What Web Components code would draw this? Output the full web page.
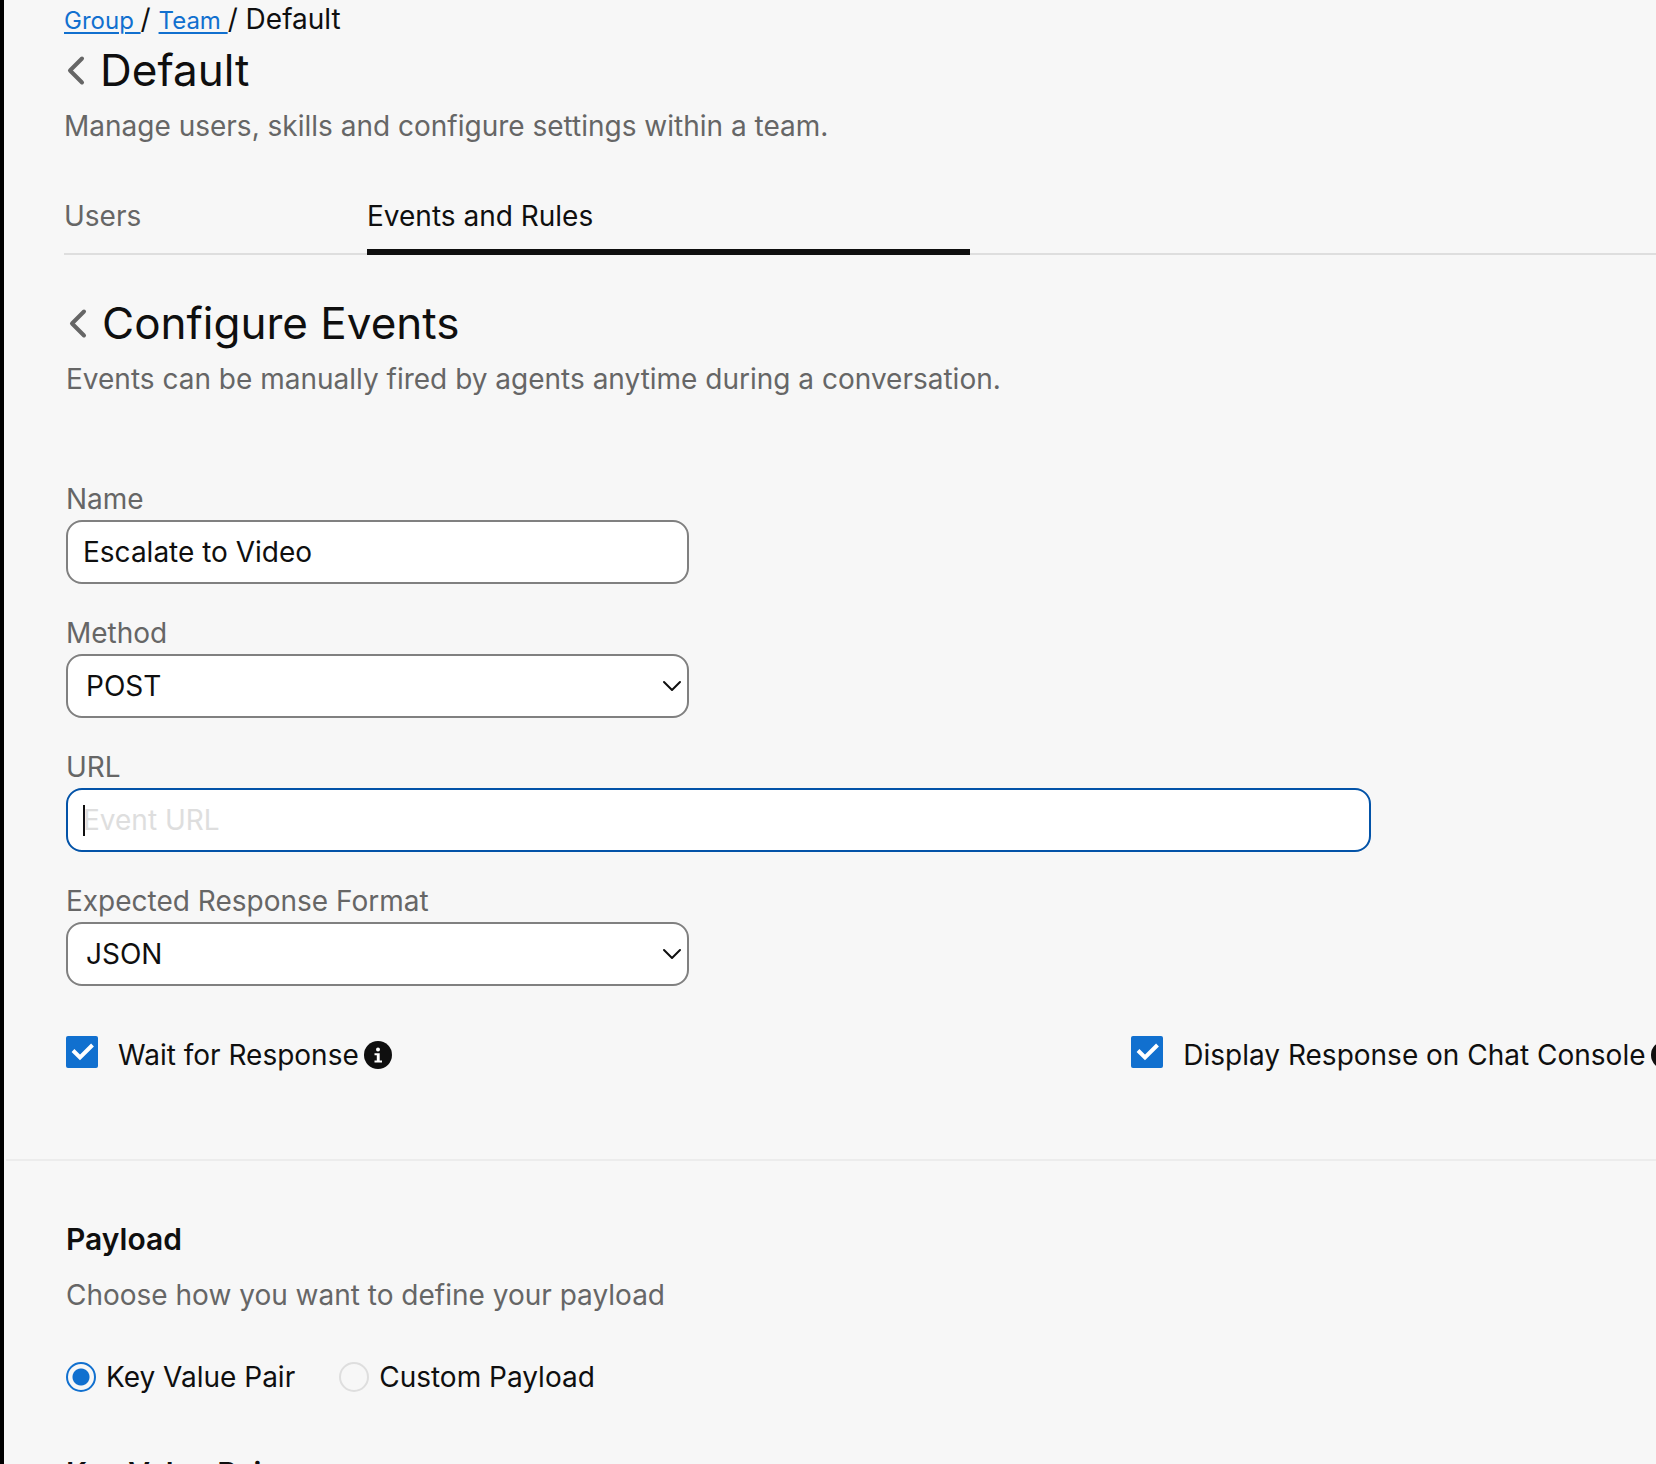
<!DOCTYPE html>
<html lang="en">
<head>
<meta charset="utf-8">
<title>Configure Events</title>
<style>
  html, body { margin: 0; height: 100%; }
  body {
    box-sizing: border-box;
    overflow: hidden;
    border-left: 4px solid #000;
    background: #f7f7f7;
    color: #0f0f0f;
    font: 400 28px/36px Inter, "Liberation Sans", sans-serif;
    --muted: #666;
    --accent: #1170cf;
    --focus: #0353a8;
    --line: #dedede;
  }
</style>
</head>
<body>
<team-page></team-page>

<script>
const define = (name, html, setup) => customElements.define(name, class extends HTMLElement {
  connectedCallback() {
    if (this.shadowRoot) return;
    const root = this.attachShadow({ mode: "open" });
    root.innerHTML = html;
    if (setup) setup(this, root);
  }
});

/* Trail of links that ends with the current page */
define("bread-crumb", `
  <style>
    :host { display: block; }
    nav { white-space: pre; }
    a { color: var(--accent); font-size: 24px; line-height: 28px; text-decoration: underline; text-decoration-thickness: 2px; text-underline-offset: 3px; }
  </style>
  <nav aria-label="Breadcrumb"><a href="#group">Group </a>/ <a href="#team">Team </a>/ Default</nav>`);

/* Back button, title and description */
define("page-heading", `
  <style>
    :host { display: block; }
    .row { display: flex; align-items: center; gap: 8px; }
    button { flex: none; display: flex; width: 28px; height: 32px; padding: 0; border: 0; background: none; color: var(--muted); }
    svg { width: 28px; height: 32px; }
    h1 { margin: 0; font-weight: 400; font-size: 44px; line-height: 52px; }
    p { margin: 12px 0 0; color: var(--muted); }
  </style>
  <div class="row">
    <button type="button" aria-label="Back">
      <svg viewBox="0 0 28 32" fill="none" stroke="currentColor" stroke-width="4" stroke-linecap="round" stroke-linejoin="round"><path d="M18 4.500 6 16.500 18 28.500"/></svg>
    </button>
    <h1><slot></slot></h1>
  </div>
  <p><slot name="description"></slot></p>`);

define("tab-bar", `
  <style>
    :host { display: flex; background: linear-gradient(var(--line), var(--line)) bottom / 100% 2px no-repeat; }
    button { box-sizing: border-box; padding: 0 0 15px; border: 0; border-bottom: 6px solid transparent; background: none; font: inherit; color: var(--muted); text-align: left; width: 303px; }
    button[aria-selected="true"] { width: 603px; color: #0f0f0f; border-color: #0f0f0f; }
  </style>
  <button type="button" role="tab" aria-selected="false">Users</button>
  <button type="button" role="tab" aria-selected="true">Events and Rules</button>`,
  host => host.setAttribute("role", "tablist"));

const fieldStyle = `
  :host { display: flex; flex-direction: column; gap: 3px; max-width: 623px; }
  label { color: var(--muted); }
  input, select {
    box-sizing: border-box; width: 100%; height: 64px; margin: 0; padding: 0 15px;
    border: 2px solid #808080; border-radius: 16px; background: #fff; outline: 0;
    color: #0f0f0f; font: inherit; appearance: none;
  }`;

define("text-field", `
  <style>${fieldStyle}
    :host([wide]) { max-width: 1305px; }
    input::placeholder { color: #dedede; opacity: 1; }
    :host([active]) input {
      border-color: var(--focus); caret-color: transparent;
      background: linear-gradient(#0f0f0f, #0f0f0f) 15px 50% / 2px 31px no-repeat #fff;
    }
  </style>
  <label for="box"></label>
  <input id="box" type="text">`, (host, root) => {
    root.querySelector("label").textContent = host.getAttribute("label");
    const box = root.querySelector("input");
    box.value = host.getAttribute("value") || "";
    box.placeholder = host.getAttribute("placeholder") || "";
  });

define("select-field", `
  <style>${fieldStyle}
    .wrap { display: grid; align-items: center; }
    .wrap > * { grid-area: 1 / 1; }
    select { padding: 0 40px 0 18px; }
    svg { justify-self: end; width: 20px; height: 12px; margin-right: 7px; pointer-events: none; }
  </style>
  <label for="box"></label>
  <div class="wrap">
    <select id="box"></select>
    <svg viewBox="0 0 20 12" fill="none" stroke="#0f0f0f" stroke-width="2" stroke-linecap="round" stroke-linejoin="round"><path d="M2 2 10 10 18 2"/></svg>
  </div>`, (host, root) => {
    root.querySelector("label").textContent = host.getAttribute("label");
    root.querySelector("select").add(new Option(host.getAttribute("value")));
  });

define("check-option", `
  <style>
    :host { display: flex; align-items: flex-start; white-space: nowrap; }
    .tick { display: grid; flex: none; width: 32px; height: 32px; margin-right: 20px; }
    .tick > * { grid-area: 1 / 1; }
    input { appearance: none; width: 32px; height: 32px; margin: 0; border-radius: 2px; background: var(--accent); }
    svg { pointer-events: none; }
    label { padding-top: 1px; }
    .info { flex: none; width: 28px; height: 28px; margin: 5px 0 0 5px; }
  </style>
  <span class="tick">
    <input type="checkbox" id="box" checked>
    <svg viewBox="0 0 32 32" fill="none" stroke="#fff" stroke-width="4"><path d="M7 14.500 14 21.500 26.500 9"/></svg>
  </span>
  <label for="box"><slot></slot></label>
  <svg class="info" viewBox="0 0 28 28" role="img" aria-label="Info">
    <circle cx="14" cy="14" r="14" fill="#0f0f0f"/>
    <circle cx="14" cy="8.500" r="2" fill="#fff"/>
    <path d="M10.500 12.200h5.200v7.200h2.300v2h-7.500v-2h2.300v-5.200h-2.300z" fill="#fff"/>
  </svg>`);

define("payload-choice", `
  <style>
    :host { display: flex; gap: 44px; }
    label { display: flex; align-items: center; gap: 10px; }
    input { appearance: none; box-sizing: border-box; flex: none; width: 30px; height: 30px; margin: 0; padding: 5px; border: 2px solid var(--line); border-radius: 50%; }
    input:checked { border-color: var(--accent); background: radial-gradient(circle, var(--accent) 8px, transparent 9px); }
  </style>
  <label><input type="radio" name="kind" checked>Key Value Pair</label>
  <label><input type="radio" name="kind">Custom Payload</label>`);

define("team-page", `
  <style>
    :host { display: block; }
    header { padding: 1px 0 0 60px; }
    header page-heading { margin-top: 7px; }
    tab-bar { margin-top: 54px; }
    .events { padding: 42px 0 86px 62px; }
    .fields { display: flex; flex-direction: column; gap: 31px; margin-top: 84px; }
    .checks { display: grid; grid-template-columns: 67% 33%; margin-top: 50px; }
    .payload { margin-left: 2px; padding: 58px 0 0 60px; border-top: 2px solid #ececec; }
    h2, h3 { margin: 0; font-size: 30px; line-height: 40px; font-weight: 600; }
    p { margin: 18px 0 46px; color: var(--muted); }
    h3 { margin-top: 58px; }
  </style>
  <header>
    <bread-crumb></bread-crumb>
    <page-heading>Default<span slot="description">Manage users, skills and configure settings within a team.</span></page-heading>
    <tab-bar></tab-bar>
  </header>
  <main>
    <section class="events">
      <page-heading>Configure Events<span slot="description">Events can be manually fired by agents anytime during a conversation.</span></page-heading>
      <div class="fields">
        <text-field label="Name" value="Escalate to Video"></text-field>
        <select-field label="Method" value="POST"></select-field>
        <text-field label="URL" placeholder="Event URL" wide active></text-field>
        <select-field label="Expected Response Format" value="JSON"></select-field>
      </div>
      <div class="checks">
        <check-option>Wait for Response</check-option>
        <check-option>Display Response on Chat Console</check-option>
      </div>
    </section>
    <section class="payload">
      <h2>Payload</h2>
      <p>Choose how you want to define your payload</p>
      <payload-choice></payload-choice>
      <h3>Key Value Pair</h3>
    </section>
  </main>`);
</script>
</body>
</html>
